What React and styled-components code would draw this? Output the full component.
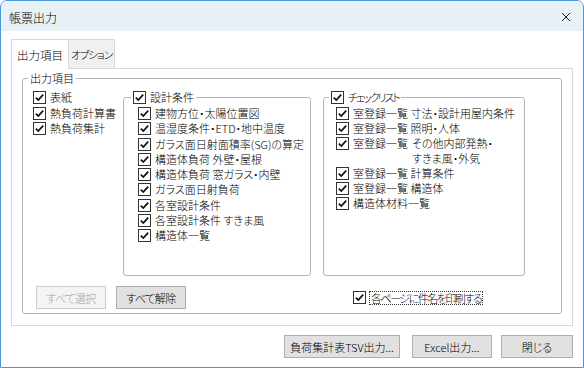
import React from "react";
import styled, { createGlobalStyle } from "styled-components";

const Global = createGlobalStyle`
  html, body { margin: 0; padding: 0; background: #fff; }
  body {
    font-family: "Noto Sans CJK JP", "Noto Sans", sans-serif;
    font-size: 11px;
    font-weight: 300;
    font-feature-settings: "palt";
    color: #000;
  }
  button { font-feature-settings: "palt"; }
  * { box-sizing: border-box; }
`;

const Window = styled.div`
  width: 584px;
  height: 368px;
  border: 1px solid #4a96e0;
  border-radius: 7px 7px 0 0;
  display: flex;
  flex-direction: column;
  background: #fff;
  overflow: hidden;
`;

const TitleBar = styled.div`
  height: 30px;
  flex: none;
  background: #e8f1f5;
  display: flex;
  align-items: center;
  justify-content: space-between;
  padding: 2px 12px 0 8px;
  font-size: 12px;
`;

const Body = styled.div`
  flex: 1;
  display: flex;
  flex-direction: column;
  padding: 8px 10px 0 10px;
`;

const TabStrip = styled.div`
  display: flex;
  height: 29px;
`;

const Tab = styled.div`
  width: ${(p) => p.$w}px;
  height: ${(p) => (p.$active ? 30 : 29)}px;
  margin-left: ${(p) => (p.$active ? 0 : -1)}px;
  display: flex;
  align-items: center;
  justify-content: center;
  white-space: nowrap;
  border: 1px solid #d9d9d9;
  border-bottom: none;
  background: ${(p) => (p.$active ? "#fff" : "#f0f0f0")};
  font-size: ${(p) => (p.$active ? 11.5 : 10.5)}px;
  letter-spacing: ${(p) => p.$ls ?? 0}px;
  position: relative;
  z-index: ${(p) => (p.$active ? 1 : 0)};
`;

const Panel = styled.div`
  height: 258px;
  border: 1px solid #d9d9d9;
  padding: 2px 10px 0 10px;
`;

const Group = styled.fieldset`
  margin: 0;
  padding: 0;
  min-width: 0;
  border: 1px solid #b4b4b4;
  border-radius: 3px;
  width: ${(p) => (p.$w ? `${p.$w}px` : "auto")};
  height: ${(p) => p.$h}px;
  flex: none;
`;

const Legend = styled.legend`
  padding: 0 2px;
  margin-left: ${(p) => p.$ml ?? 5}px;
  height: 15px;
  line-height: 15px;
  display: flex;
  align-items: center;
  gap: 4px;
`;

const Inner = styled.div`
  padding: 4px 0 0 10px;
  display: flex;
  flex-direction: column;
`;

const Columns = styled.div`
  display: flex;
  align-items: flex-start;
`;

const List = styled.div`
  display: flex;
  flex-direction: column;
  gap: ${(p) => p.$gap ?? 0}px;
  width: ${(p) => (p.$w ? `${p.$w}px` : "auto")};
  padding: ${(p) => p.$pt ?? 0}px 0 0 ${(p) => p.$pl ?? 0}px;
`;

const Row = styled.div`
  display: flex;
  align-items: ${(p) => (p.$multi ? "flex-start" : "center")};
  min-height: 15px;
  line-height: 15px;
  gap: 4px;
  white-space: nowrap;
`;

const Tight = styled.span`
  letter-spacing: ${(p) => p.$ls ?? 0}px;
`;

const Box = styled.span`
  width: 13px;
  height: 13px;
  flex: none;
  border: 1px solid #333;
  background: #fff;
  display: inline-flex;
  align-items: center;
  justify-content: center;
  margin-top: ${(p) => (p.$multi ? 1 : 0)}px;
`;

const Stack = styled.span`
  display: inline-block;
`;

const Spacer = styled.div`
  width: ${(p) => p.$w}px;
  flex: none;
`;

const BottomRow = styled.div`
  display: flex;
  align-items: center;
  margin-top: 10px;
  padding-left: 3px;
  height: 23px;
`;

const Button = styled.button`
  width: ${(p) => p.$w}px;
  height: 23px;
  margin-left: ${(p) => p.$ml ?? 0}px;
  padding: 0;
  font-family: inherit;
  font-weight: 300;
  font-size: 11px;
  letter-spacing: ${(p) => p.$ls ?? 0}px;
  border: 1px solid ${(p) => (p.disabled ? "#cccccc" : "#adadad")};
  background: ${(p) => (p.disabled ? "#f4f4f4" : "#e1e1e1")};
  color: ${(p) => (p.disabled ? "#a0a0a0" : "#000")};
  flex: none;
`;

const PrintOption = styled.div`
  display: flex;
  align-items: center;
  gap: 3px;
  margin-left: 167px;
`;

const Focus = styled.span`
  border: 1px dotted #333;
  padding: 0 1px;
  line-height: 12px;
  letter-spacing: -1.5px;
`;

const Footer = styled.div`
  display: flex;
  justify-content: flex-end;
  margin-top: 9px;
`;

function Check({ multi }) {
  return (
    <Box $multi={multi}>
      <svg width="11" height="11" viewBox="0 0 11 11">
        <path d="M1.8 5.6 L4.3 8.1 L9.2 2.6" fill="none" stroke="#111" strokeWidth="1.7" />
      </svg>
    </Box>
  );
}

function Item({ children }) {
  return (
    <Row>
      <Check />
      <span>{children}</span>
    </Row>
  );
}

const designItems = [
  "建物方位・太陽位置図",
  "温湿度条件・ETD・地中温度",
  "ガラス面日射面積率(SG)の算定",
  "構造体負荷 外壁・屋根",
  "構造体負荷 窓ガラス・内壁",
  "ガラス面日射負荷",
  "各室設計条件",
  "各室設計条件 すきま風",
  "構造体一覧",
];

export default function App() {
  return (
    <>
      <Global />
      <Window>
        <TitleBar>
          <span>帳票出力</span>
          <svg width="10" height="10" viewBox="0 0 10 10">
            <path d="M1 1 L9 9 M9 1 L1 9" stroke="#222" strokeWidth="1" />
          </svg>
        </TitleBar>
        <Body>
          <TabStrip>
            <Tab $active $w={58}>出力項目</Tab>
            <Tab $w={47} $ls={-1}>オプション</Tab>
          </TabStrip>
          <Panel>
            <Group $h={243}>
              <Legend>出力項目</Legend>
              <Inner>
                <Columns>
                  <List $w={90} $gap={0.5}>
                    <Item>表紙</Item>
                    <Item>熱負荷計算書</Item>
                    <Item>熱負荷集計</Item>
                  </List>
                  <Group $w={188} $h={186}>
                    <Legend $ml={7}>
                      <Check />
                      <span>設計条件</span>
                    </Legend>
                    <List $pt={1} $pl={14} $gap={0.25}>
                      {designItems.map((t) => (
                        <Item key={t}>{t}</Item>
                      ))}
                    </List>
                  </Group>
                  <Spacer $w={12} />
                  <Group $w={202} $h={186}>
                    <Legend $ml={5}>
                      <Check />
                      <Tight $ls={-2}>チェックリスト</Tight>
                    </Legend>
                    <List $pt={1} $pl={12}>
                      <Item>室登録一覧 寸法・設計用屋内条件</Item>
                      <Item>室登録一覧 照明・人体</Item>
                      <Row $multi>
                        <Check multi />
                        <span>室登録一覧 </span>
                        <Stack>
                          その他内部発熱・
                          <br />
                          すきま風・外気
                        </Stack>
                      </Row>
                      <Item>室登録一覧 計算条件</Item>
                      <Item>室登録一覧 構造体</Item>
                      <Item>構造体材料一覧</Item>
                    </List>
                  </Group>
                </Columns>
                <BottomRow>
                  <Button disabled $w={70} $ls={-0.5}>すべて選択</Button>
                  <Button $w={70} $ml={10} $ls={-0.5}>すべて解除</Button>
                  <PrintOption>
                    <Check />
                    <Focus>各ページに件名を印刷する</Focus>
                  </PrintOption>
                </BottomRow>
              </Inner>
            </Group>
          </Panel>
          <Footer>
            <Button $w={116}>負荷集計表TSV出力...</Button>
            <Button $w={80} $ml={12}>Excel出力...</Button>
            <Button $w={72} $ml={9}>閉じる</Button>
          </Footer>
        </Body>
      </Window>
    </>
  );
}
